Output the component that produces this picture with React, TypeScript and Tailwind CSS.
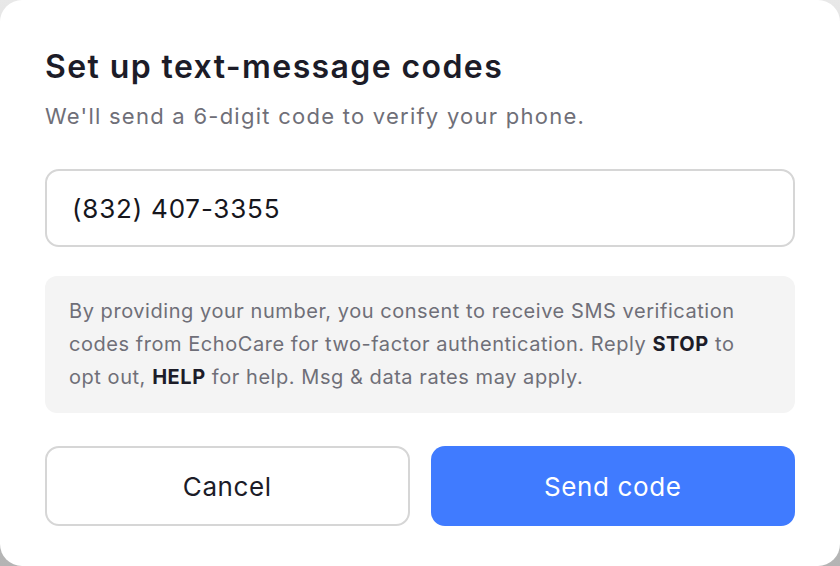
export default function App() {
  return (
    <div className="h-[566px] w-[840px] bg-gradient-to-b from-[#e8e8e8] to-[#b4b4b4]">
      <div
        className="flex h-full w-full flex-col rounded-[22px] bg-white px-[45px] pt-[47px]"
        style={{ fontFamily: 'Inter, "Liberation Sans", sans-serif' }}
      >
        <h1 className="text-[32px] font-semibold leading-[40px] tracking-[1.4px] text-[#1c1c28]">
          Set up text-message codes
        </h1>
        <p className="mt-[15px] text-[22px] leading-[28px] tracking-[1.25px] text-[#6f6f78]">
          We'll send a 6-digit code to verify your phone.
        </p>
        <input
          defaultValue="(832) 407-3355"
          className="mt-[39px] h-[78px] w-full rounded-[14px] border-2 border-[#d6d6d6] bg-white px-[25px] text-[26px] tracking-[0.8px] text-[#16161d] outline-none"
        />
        <div className="mt-[29px] rounded-[12px] bg-[#f4f4f4] py-[19px] pl-[24px] pr-[30px] text-[20px] leading-[33px] tracking-[0.55px] text-[#6f6f78]">
          By providing your number, you consent to receive SMS verification
          codes from EchoCare for two-factor authentication. Reply{' '}
          <b className="font-bold text-[#1c1c28]">STOP</b> to opt out,{' '}
          <b className="font-bold text-[#1c1c28]">HELP</b> for help. Msg &amp;
          data rates may apply.
        </div>
        <div className="mt-[33px] grid grid-cols-2 gap-[21px]">
          <button className="h-[80px] rounded-[14px] border-2 border-[#d6d6d6] bg-white text-[26px] tracking-[0.6px] text-[#1c1c28]">
            Cancel
          </button>
          <button className="h-[80px] rounded-[14px] bg-[#407bff] text-[26px] tracking-[0.6px] text-white">
            Send code
          </button>
        </div>
      </div>
    </div>
  );
}
